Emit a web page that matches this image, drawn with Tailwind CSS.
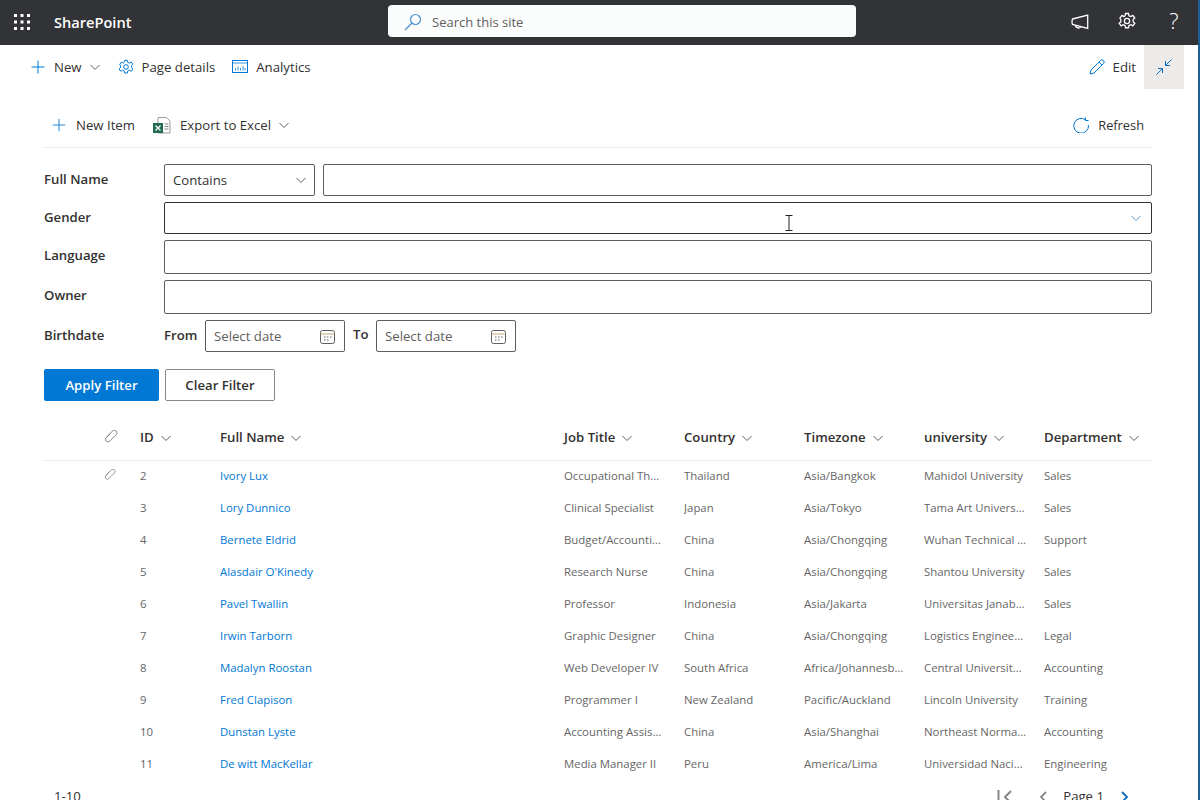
<!DOCTYPE html>
<html lang="en">
<head>
  <meta charset="UTF-8" />
  <title>SharePoint</title>
  <script src="https://cdn.jsdelivr.net/npm/@tailwindcss/browser@4"></script>
</head>
<body class="h-[800px] overflow-hidden bg-white font-['Open_Sans',sans-serif] text-[13.2px] text-[#323130]">
  <div class="relative h-[800px] w-[1198px] overflow-hidden">
    <!-- top bar -->
    <header class="flex h-[45px] items-center bg-[#323336] text-white">
      <div class="flex w-[54px] justify-center">
        <svg class="ml-[-10px] h-4 w-4 -translate-y-px" viewBox="0 0 16 16" fill="#fff">
          <rect x="0" y="0" width="3" height="3"/><rect x="6.500" y="0" width="3" height="3"/><rect x="13" y="0" width="3" height="3"/>
          <rect x="0" y="6.500" width="3" height="3"/><rect x="6.500" y="6.500" width="3" height="3"/><rect x="13" y="6.500" width="3" height="3"/>
          <rect x="0" y="13" width="3" height="3"/><rect x="6.500" y="13" width="3" height="3"/><rect x="13" y="13" width="3" height="3"/>
        </svg>
      </div>
      <span class="w-[334px] text-[14.6px] font-semibold">SharePoint</span>
      <div class="mb-[3px] flex h-[32px] w-[468px] items-center rounded-[4px] bg-[#fbfcfc] pl-4 pt-[2px] text-[13px] text-[#605e5c]">
        <svg class="h-[18px] w-[18px]" viewBox="0 0 18 18" fill="none" stroke="#4a90d0" stroke-width="1.200"><circle cx="11.500" cy="6.500" r="5"/><path d="M8 10 1 17"/></svg>
        <span class="ml-[10px] translate-y-px">Search this site</span>
      </div>
      <div class="ml-auto flex items-center">
        <svg class="h-[16px] w-[18px] -translate-y-[1px]" viewBox="0 0 18 16" fill="none" stroke="#fff" stroke-width="1.300"><path d="M1.500 5 16.700 1v13.500L1.500 10.500q-1-2.800 0-5.500zM4.500 11.300c0 3 4.500 3.500 5.500 1.300"/></svg>
        <svg class="ml-[29px] h-[18px] w-[18px] -translate-y-[2px]" viewBox="0 0 24 24" fill="none" stroke="#fff" stroke-width="1.700"><circle cx="12" cy="12" r="3.500"/><path d="M10 2h4l.6 3 2.500 1.200 2.700-1.600 2.600 3.400-2.200 2.100v2.800l2.200 2.100-2.600 3.400-2.700-1.600-2.500 1.200-.6 3h-4l-.6-3-2.500-1.200-2.700 1.600-2.600-3.400 2.200-2.100v-2.800L2.600 8l2.600-3.400 2.700 1.600L9.400 5z"/></svg>
        <span class="ml-[31px] mr-[17px] w-[14px] -translate-y-[3px] text-center text-[22px] font-light leading-none">?</span>
      </div>
    </header>

    <!-- page command bar -->
    <div class="flex h-[44px] items-center pl-[30px]">
      <svg class="h-4 w-4" viewBox="0 0 16 16" stroke="#0078d4" stroke-width="1"><path d="M8 1.500v13M1.500 8h13"/></svg>
      <span class="ml-[8px] translate-y-px">New</span>
      <svg class="ml-[8px] h-[10px] w-[10px]" viewBox="0 0 10 10" fill="none" stroke="#605e5c"><path d="M.5 3 5 7.500 9.500 3"/></svg>
      <svg class="ml-[18px] h-4 w-4" viewBox="0 0 24 24" fill="none" stroke="#0078d4" stroke-width="1.500"><circle cx="12" cy="12" r="3.500"/><path d="M10 2h4l.6 3 2.500 1.200 2.700-1.600 2.600 3.400-2.200 2.100v2.800l2.200 2.100-2.600 3.400-2.700-1.600-2.500 1.200-.6 3h-4l-.6-3-2.500-1.200-2.700 1.600-2.600-3.400 2.200-2.100v-2.800L2.600 8l2.600-3.400 2.700 1.600L9.400 5z"/></svg>
      <span class="ml-[8px] translate-y-px">Page details</span>
      <svg class="ml-[17px] h-4 w-4" viewBox="0 0 16 16" fill="none" stroke="#0078d4"><rect x=".5" y="1.500" width="15" height="12"/><path d="M.5 4h15M3.500 11.500V9M6 11.500V7.500M8.500 11.500V9M11 11.500V7M13 11.500V9" stroke-width=".8"/></svg>
      <span class="ml-[8px] translate-y-px">Analytics</span>
      <div class="ml-auto flex items-center">
        <svg class="h-4 w-4" viewBox="0 0 16 16" fill="none" stroke="#0078d4"><path d="M1 15l1-4L11.500 1.500a1.800 1.800 0 0 1 3 3L5 14zM10 3l3 3"/></svg>
        <span class="ml-[8px] translate-y-px">Edit</span>
        <div class="ml-[8px] mr-[14px] flex h-[44px] w-[40px] items-center justify-center bg-[#edebe9]">
          <svg class="h-4 w-4" viewBox="0 0 16 16" fill="none" stroke="#106ebe"><path d="M15.500.5 9.500 6.500M9.500 2v4.500H14M.5 15.500l6-6M2 9.500h4.500V14"/></svg>
        </div>
      </div>
    </div>

    <main class="pl-[44px] pr-[46px]">
      <!-- list toolbar -->
      <div class="mt-[16px] flex h-[43px] items-center border-b border-[#edebe9] pb-[2px] pl-[8px] pr-[8px]">
        <svg class="h-[14px] w-[14px]" viewBox="0 0 16 16" stroke="#0078d4"><path d="M8 1v14M1 8h14"/></svg>
        <span class="ml-[10px] translate-y-px">New Item</span>
        <svg class="ml-[18px] h-[18px] w-[18px]" viewBox="0 0 18 18">
          <path d="M5 1.500h8.500L17 5v12H5z" fill="#fff" stroke="#9a9a9a"/>
          <path d="M11.500 8h4M11.500 10.500h4M11.500 13h4" stroke="#8a8a8a"/>
          <rect x="0" y="7" width="10" height="10" fill="#1e6b52"/>
          <path d="M2.500 9.500l5 5M7.500 9.500l-5 5" stroke="#fff" stroke-width="1.200"/>
        </svg>
        <span class="ml-[9px] translate-y-px">Export to Excel</span>
        <svg class="ml-[8px] h-[10px] w-[10px]" viewBox="0 0 10 10" fill="none" stroke="#605e5c"><path d="M.5 3 5 7.500 9.500 3"/></svg>
        <svg class="ml-auto h-4 w-4" viewBox="0 0 16 16" fill="none" stroke="#0078d4"><path d="M12.500 2.800A7.400 7.400 0 1 0 15.500 8M12.500 .5v3h3"/></svg>
        <span class="ml-[9px] translate-y-px text-[12.800px]">Refresh</span>
      </div>

      <!-- filter form -->
      <div class="mt-[16px] flex flex-col font-semibold">
        <div class="flex h-[32px] items-center">
          <label class="w-[120px]">Full Name</label>
          <div class="flex h-full w-[151px] items-center justify-between rounded-[2px] border border-[#605e5c] pl-[8px] pr-[8px] font-normal">
            <span class="translate-y-px">Contains</span>
            <svg class="h-[10px] w-[10px]" viewBox="0 0 10 10" fill="none" stroke="#605e5c"><path d="M.5 3 5 7.500 9.500 3"/></svg>
          </div>
          <div class="ml-[8px] h-full flex-1 rounded-[2px] border border-[#605e5c]"></div>
        </div>
        <div class="mt-[6px] flex h-[32px] items-center">
          <label class="w-[120px]">Gender</label>
          <div class="relative flex h-full flex-1 items-center justify-end rounded-[2px] border border-[#323130] pr-[10px]">
            <svg class="h-[10px] w-[10px]" viewBox="0 0 10 10" fill="none" stroke="#5a9bd5"><path d="M.5 3 5 7.500 9.500 3"/></svg>
            <!-- mouse cursor -->
            <svg class="absolute left-[620px] top-[12px] h-4 w-2" viewBox="0 0 8 16" fill="none" stroke="#222"><path d="M.5.500h7M4 .5v15M.5 15.500h7"/></svg>
          </div>
        </div>
        <div class="mt-[6px] flex h-[34px] items-center">
          <label class="w-[120px] -translate-y-px">Language</label>
          <div class="h-full flex-1 rounded-[2px] border border-[#605e5c]"></div>
        </div>
        <div class="mt-[6px] flex h-[34px] items-center">
          <label class="w-[120px] -translate-y-px">Owner</label>
          <div class="h-full flex-1 rounded-[2px] border border-[#605e5c]"></div>
        </div>
        <div class="mt-[6px] flex h-[32px] items-center">
          <label class="w-[120px]">Birthdate</label>
          <span class="w-[41px]">From</span>
          <div class="flex h-full w-[140px] items-center justify-between rounded-[2px] border border-[#605e5c] pl-[8px] pr-[9px] font-normal text-[#605e5c]">
            <span class="translate-y-px">Select date</span>
            <svg class="h-[15px] w-[15px]" viewBox="0 0 15 15" fill="none" stroke="#605e5c"><rect x=".5" y="1.500" width="14" height="13" rx="2"/><path d="M.5 5h14" stroke="#c8a478"/><path d="M4 8h1.500M7 8h1.500M10 8h1.500M4 11h1.500M7 11h1.500"/></svg>
          </div>
          <span class="ml-[8px] w-[23px] -translate-y-px">To</span>
          <div class="flex h-full w-[140px] items-center justify-between rounded-[2px] border border-[#605e5c] pl-[8px] pr-[9px] font-normal text-[#605e5c]">
            <span class="translate-y-px">Select date</span>
            <svg class="h-[15px] w-[15px]" viewBox="0 0 15 15" fill="none" stroke="#605e5c"><rect x=".5" y="1.500" width="14" height="13" rx="2"/><path d="M.5 5h14" stroke="#c8a478"/><path d="M4 8h1.500M7 8h1.500M10 8h1.500M4 11h1.500M7 11h1.500"/></svg>
          </div>
        </div>
        <div class="mt-[17px] flex h-[32px] gap-[6px]">
          <button class="w-[115px] rounded-[2px] bg-[#0078d4] pt-[2px] font-semibold text-white">Apply Filter</button>
          <button class="w-[110px] rounded-[2px] border border-[#8a8886] pt-[2px] font-semibold">Clear Filter</button>
        </div>
      </div>

      <!-- list -->
      <div class="mt-[15px]">
        <div class="flex h-[45px] items-center border-b border-[#edebe9] font-semibold">
          <div class="flex w-[96px] justify-end pr-[22px]">
            <svg class="h-[14px] w-[14px] -translate-y-px" viewBox="0 0 14 14" fill="none" stroke="#8a8886"><path d="M6.500 3.500 2.200 7.800a2.400 2.400 0 0 0 3.400 3.400l6.600-6.600a2.500 2.500 0 0 0-3.600-3.600L1.500 8"/></svg>
          </div>
          <div class="flex w-[80px] items-center">ID<svg class="ml-[7px] h-[10px] w-[10px]" viewBox="0 0 10 10" fill="none" stroke="#605e5c"><path d="M.5 3 5 7.500 9.500 3"/></svg></div>
          <div class="flex w-[344px] items-center">Full Name<svg class="ml-[7px] h-[10px] w-[10px]" viewBox="0 0 10 10" fill="none" stroke="#605e5c"><path d="M.5 3 5 7.500 9.500 3"/></svg></div>
          <div class="flex w-[120px] items-center">Job Title<svg class="ml-[7px] h-[10px] w-[10px]" viewBox="0 0 10 10" fill="none" stroke="#605e5c"><path d="M.5 3 5 7.500 9.500 3"/></svg></div>
          <div class="flex w-[120px] items-center">Country<svg class="ml-[7px] h-[10px] w-[10px]" viewBox="0 0 10 10" fill="none" stroke="#605e5c"><path d="M.5 3 5 7.500 9.500 3"/></svg></div>
          <div class="flex w-[120px] items-center">Timezone<svg class="ml-[7px] h-[10px] w-[10px]" viewBox="0 0 10 10" fill="none" stroke="#605e5c"><path d="M.5 3 5 7.500 9.500 3"/></svg></div>
          <div class="flex w-[120px] items-center">university<svg class="ml-[7px] h-[10px] w-[10px]" viewBox="0 0 10 10" fill="none" stroke="#605e5c"><path d="M.5 3 5 7.500 9.500 3"/></svg></div>
          <div class="flex items-center">Department<svg class="ml-[7px] h-[10px] w-[10px]" viewBox="0 0 10 10" fill="none" stroke="#605e5c"><path d="M.5 3 5 7.500 9.500 3"/></svg></div>
        </div>
        <div class="text-[11.4px] text-[#666] [&>div]:pb-[2px]">
          <div class="flex h-[32px] items-center">
            <div class="flex w-[96px] justify-end pr-[24px]"><svg class="h-3 w-3 -translate-y-px" viewBox="0 0 14 14" fill="none" stroke="#8a8886"><path d="M6.500 3.500 2.200 7.800a2.400 2.400 0 0 0 3.400 3.400l6.600-6.600a2.500 2.500 0 0 0-3.600-3.600L1.500 8"/></svg></div>
            <div class="w-[80px]">2</div><div class="w-[344px] text-[#0078d4]">Ivory Lux</div><div class="w-[120px] truncate pr-[22px]">Occupational Therapist</div><div class="w-[120px] truncate pr-[22px]">Thailand</div><div class="w-[120px] truncate pr-5">Asia/Bangkok</div><div class="w-[120px] truncate pr-[17px]">Mahidol University</div><div>Sales</div>
          </div>
          <div class="flex h-[32px] items-center">
            <div class="w-[96px]"></div><div class="w-[80px]">3</div><div class="w-[344px] text-[#0078d4]">Lory Dunnico</div><div class="w-[120px] truncate pr-[22px]">Clinical Specialist</div><div class="w-[120px] truncate pr-[22px]">Japan</div><div class="w-[120px] truncate pr-5">Asia/Tokyo</div><div class="w-[120px] truncate pr-[17px]">Tama Art University</div><div>Sales</div>
          </div>
          <div class="flex h-[32px] items-center">
            <div class="w-[96px]"></div><div class="w-[80px]">4</div><div class="w-[344px] text-[#0078d4]">Bernete Eldrid</div><div class="w-[120px] truncate pr-[20px]">Budget/Accounting Analyst</div><div class="w-[120px] truncate pr-[22px]">China</div><div class="w-[120px] truncate pr-5">Asia/Chongqing</div><div class="w-[120px] truncate pr-[17px]">Wuhan Technical College</div><div>Support</div>
          </div>
          <div class="flex h-[32px] items-center">
            <div class="w-[96px]"></div><div class="w-[80px]">5</div><div class="w-[344px] text-[#0078d4]">Alasdair O'Kinedy</div><div class="w-[120px] truncate pr-[22px]">Research Nurse</div><div class="w-[120px] truncate pr-[22px]">China</div><div class="w-[120px] truncate pr-5">Asia/Chongqing</div><div class="w-[120px] truncate pr-[17px]">Shantou University</div><div>Sales</div>
          </div>
          <div class="flex h-[32px] items-center">
            <div class="w-[96px]"></div><div class="w-[80px]">6</div><div class="w-[344px] text-[#0078d4]">Pavel Twallin</div><div class="w-[120px] truncate pr-[22px]">Professor</div><div class="w-[120px] truncate pr-[22px]">Indonesia</div><div class="w-[120px] truncate pr-5">Asia/Jakarta</div><div class="w-[120px] truncate pr-[17px]">Universitas Janabadra</div><div>Sales</div>
          </div>
          <div class="flex h-[32px] items-center">
            <div class="w-[96px]"></div><div class="w-[80px]">7</div><div class="w-[344px] text-[#0078d4]">Irwin Tarborn</div><div class="w-[120px] truncate pr-[22px]">Graphic Designer</div><div class="w-[120px] truncate pr-[22px]">China</div><div class="w-[120px] truncate pr-5">Asia/Chongqing</div><div class="w-[120px] truncate pr-[17px]">Logistics Engineering</div><div>Legal</div>
          </div>
          <div class="flex h-[32px] items-center">
            <div class="w-[96px]"></div><div class="w-[80px]">8</div><div class="w-[344px] text-[#0078d4]">Madalyn Roostan</div><div class="w-[120px] truncate pr-[22px]">Web Developer IV</div><div class="w-[120px] truncate pr-[22px]">South Africa</div><div class="w-[120px] truncate pr-5">Africa/Johannesburg</div><div class="w-[120px] truncate pr-[17px]">Central University of</div><div>Accounting</div>
          </div>
          <div class="flex h-[32px] items-center">
            <div class="w-[96px]"></div><div class="w-[80px]">9</div><div class="w-[344px] text-[#0078d4]">Fred Clapison</div><div class="w-[120px] truncate pr-[22px]">Programmer I</div><div class="w-[120px] truncate pr-[22px]">New Zealand</div><div class="w-[120px] truncate pr-5">Pacific/Auckland</div><div class="w-[120px] truncate pr-[17px]">Lincoln University</div><div>Training</div>
          </div>
          <div class="flex h-[32px] items-center">
            <div class="w-[96px]"></div><div class="w-[80px]">10</div><div class="w-[344px] text-[#0078d4]">Dunstan Lyste</div><div class="w-[120px] truncate pr-[22px]">Accounting Assistant</div><div class="w-[120px] truncate pr-[22px]">China</div><div class="w-[120px] truncate pr-5">Asia/Shanghai</div><div class="w-[120px] truncate pr-[17px]">Northeast Normal University</div><div>Accounting</div>
          </div>
          <div class="flex h-[32px] items-center">
            <div class="w-[96px]"></div><div class="w-[80px]">11</div><div class="w-[344px] text-[#0078d4]">De witt MacKellar</div><div class="w-[120px] truncate pr-[22px]">Media Manager II</div><div class="w-[120px] truncate pr-[22px]">Peru</div><div class="w-[120px] truncate pr-5">America/Lima</div><div class="w-[120px] truncate pr-[17px]">Universidad Nacional</div><div>Engineering</div>
          </div>
        </div>
        <!-- pager -->
        <div class="flex h-[32px] items-center pl-[10px]">
          <span>1-10</span>
          <div class="ml-auto flex items-center">
            <svg class="h-[14px] w-[16px]" viewBox="0 0 16 14" fill="none" stroke="#8a8886" stroke-width="2"><path d="M1.500 0v14M14 1 8 7l6 6"/></svg>
            <svg class="ml-[26px] h-3 w-[8px]" viewBox="0 0 8 12" fill="none" stroke="#8a8886" stroke-width="1.800"><path d="M7 1 2 6l5 5"/></svg>
            <span class="ml-[16px]">Page 1</span>
            <svg class="ml-[17px] mr-[23px] h-3 w-[8px]" viewBox="0 0 8 12" fill="none" stroke="#0f6cbd" stroke-width="1.800"><path d="M1 1l5 5-5 5"/></svg>
          </div>
        </div>
      </div>
    </main>
  </div>
  <!-- window edge -->
  <div class="absolute right-0 top-0 h-[800px] w-[2px] bg-[#1f5f94]"></div>
</body>
</html>
